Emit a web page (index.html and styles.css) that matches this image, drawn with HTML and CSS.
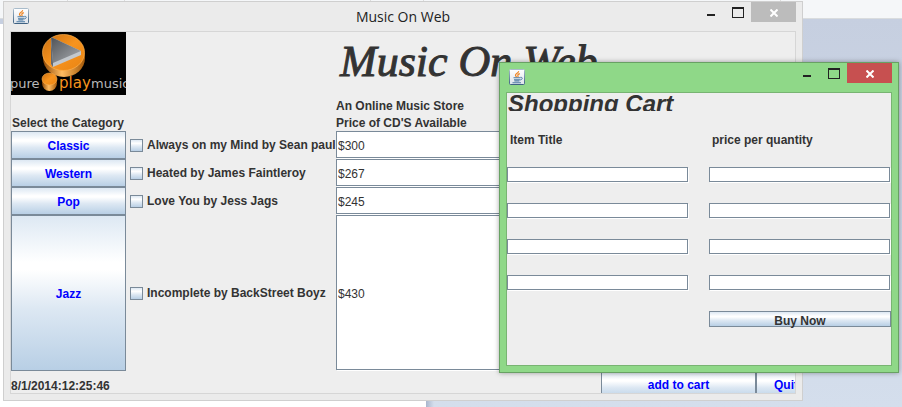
FILE: index.html
```html
<!DOCTYPE html>
<html lang="en">
<head>
<meta charset="utf-8">
<title>Music On Web</title>
<link rel="stylesheet" href="styles.css">
</head>
<body>
<svg width="0" height="0" class="defs" aria-hidden="true">
  <defs>
    <linearGradient id="tile" x1="0" y1="0" x2="0" y2="1"><stop offset="0" stop-color="#fff"/><stop offset="1" stop-color="#dde3ea"/></linearGradient>
    <linearGradient id="edge" x1="0" y1="0" x2="0" y2="1"><stop offset="0" stop-color="#a9bccb"/><stop offset="1" stop-color="#3f6283"/></linearGradient>
    <symbol id="java" viewBox="0 0 16 16">
      <rect x=".5" y=".5" width="15" height="15" rx="1" fill="url(#tile)" stroke="url(#edge)"/>
      <path d="M9.6 2.2C10 4 6.400 4.600 6.500 6.300c0 .8.700 1.200 1 1.900M10.800 4.600C9 5.300 8.400 6 9 7c.3.600 0 1-.4 1.300" fill="none" stroke="#ee8422" stroke-width="1.200"/>
      <path d="M4.500 8.800h7M5 10.700h6M5.400 12h5M3.500 13.700h8.500" stroke="#4c7ba3" stroke-width="1.100"/>
      <path d="M11.500 8.300c2.600-.3 2.200 2.400-.4 2.700" fill="none" stroke="#4c7ba3"/>
    </symbol>
  </defs>
</svg>
<div class="desktop">
  <div class="tabs"><i></i><i></i><i></i><i></i><i></i></div>
  <div class="backdrop"><div class="page"></div><div class="wall"></div></div>

  <main class="window store">
    <header class="titlebar">
      <svg class="app-icon" aria-hidden="true"><use href="#java"/></svg>
      <span class="caption">Music On Web</span>
      <div class="controls">
        <button class="min" aria-label="Minimize"></button>
        <button class="max" aria-label="Maximize"></button>
        <button class="close" aria-label="Close"><svg viewBox="0 0 8 8"><path d="M.5.5l7 7M7.500.5l-7 7"/></svg></button>
      </div>
    </header>
    <div class="client">
      <div class="banner">
        <div class="side">
          <svg class="logo" viewBox="0 0 115 63" role="img" aria-label="pure playmusic">
            <defs>
              <linearGradient id="disc" x1="0" y1="0" x2="1" y2="1"><stop offset="0" stop-color="#c96f12"/><stop offset=".5" stop-color="#f7941f"/><stop offset="1" stop-color="#e88312"/></linearGradient>
              <linearGradient id="rim" x1="0" y1="0" x2="1" y2="0"><stop offset="0" stop-color="#8f4804"/><stop offset=".45" stop-color="#ffbd62"/><stop offset="1" stop-color="#a45808"/></linearGradient>
              <linearGradient id="tri" x1="0" y1="0" x2="1" y2="1"><stop offset="0" stop-color="#4f5256"/><stop offset="1" stop-color="#a9adb2"/></linearGradient>
            </defs>
            <rect width="115" height="63" fill="#000"/>
            <ellipse cx="53" cy="26" rx="21" ry="19" fill="url(#rim)"/>
            <ellipse cx="52.500" cy="20.500" rx="21" ry="18" fill="url(#disc)" stroke="#ffb04c" stroke-width=".7"/>
            <path d="M40 5v27l2 3 28-12v-4z" fill="#c3c8cd"/>
            <path d="M40 5l30 14-28 12z" fill="url(#tri)"/>
            <path d="M40 5l2 26v4l-2-3z" fill="#65696e"/>
            <ellipse cx="38.500" cy="51" rx="7.500" ry="8" fill="url(#rim)"/>
            <ellipse cx="38.500" cy="47" rx="7.500" ry="6" fill="url(#disc)" stroke="#ffb04c" stroke-width=".6"/>
            <text x="-1" y="56" class="logo-text" fill="#b9b9b9">pure</text>
            <text x="48" y="56" class="logo-text brand" fill="#f7941f">play</text>
            <text x="80" y="56" class="logo-text" fill="#b9b9b9">music</text>
          </svg>
          <p>Select the Category</p>
        </div>
        <div class="heading">
          <h1>Music On Web</h1>
          <p>An Online Music Store</p>
          <p>Price of CD'S Available</p>
        </div>
      </div>
      <div class="row">
        <button class="metal">Classic</button>
        <label><input type="checkbox">Always on my Mind by Sean paul</label>
        <input class="field" type="text" value="$300" aria-label="Price of Always on my Mind">
      </div>
      <div class="row">
        <button class="metal">Western</button>
        <label><input type="checkbox">Heated by James Faintleroy</label>
        <input class="field" type="text" value="$267" aria-label="Price of Heated">
      </div>
      <div class="row">
        <button class="metal">Pop</button>
        <label><input type="checkbox">Love You by Jess Jags</label>
        <input class="field" type="text" value="$245" aria-label="Price of Love You">
      </div>
      <div class="row tall">
        <button class="metal">Jazz</button>
        <label><input type="checkbox">Incomplete by BackStreet Boyz</label>
        <input class="field" type="text" value="$430" aria-label="Price of Incomplete">
      </div>
      <footer class="status">
        <time>8/1/2014:12:25:46</time>
        <div class="actions">
          <button class="metal add">add to cart</button>
          <button class="metal quit">Quit</button>
        </div>
      </footer>
    </div>
  </main>

  <section class="window cart">
    <header class="titlebar">
      <svg class="app-icon" aria-hidden="true"><use href="#java"/></svg>
      <div class="controls">
        <button class="min" aria-label="Minimize"></button>
        <button class="max" aria-label="Maximize"></button>
        <button class="close" aria-label="Close"><svg viewBox="0 0 8 8"><path d="M.5.5l7 7M7.500.5l-7 7"/></svg></button>
      </div>
    </header>
    <div class="client order">
      <h2>Shopping Cart</h2>
      <span class="column-title" id="item">Item Title</span>
      <span class="column-title" id="price">price per quantity</span>
      <input class="field" type="text" aria-labelledby="item"><input class="field" type="text" aria-labelledby="price">
      <input class="field" type="text" aria-labelledby="item"><input class="field" type="text" aria-labelledby="price">
      <input class="field" type="text" aria-labelledby="item"><input class="field" type="text" aria-labelledby="price">
      <input class="field" type="text" aria-labelledby="item"><input class="field" type="text" aria-labelledby="price">
      <button class="metal buy">Buy Now</button>
    </div>
  </section>
</div>
</body>
</html>
```
FILE: styles.css
```css
* { box-sizing: border-box; }
body {
  margin: 0;
  font: bold 12px/18px "Liberation Sans", Arial, sans-serif;
  color: #333;
}
p, h1, h2 { margin: 0; }
button, input { font: inherit; margin: 0; }
.defs { position: absolute; }

/* Desktop behind the windows */
.desktop {
  position: relative;
  display: flex;
  flex-direction: column;
  min-height: 100vh;
  overflow: hidden;
}
.tabs {
  display: grid;
  grid-template-columns: 68px 57px 246px 53px 357px;
  height: 19px;
  background: #f5f7f9;
  border-bottom: 1px solid #d9dcde;
}
.tabs i { height: 1px; border-right: 1px solid #dcdcdc; }
.backdrop { flex: 1; display: flex; }
.page { width: 426px; border-top: 5px solid #c6cfe0; background: #fff; }
.wall {
  flex: 1;
  background:
    linear-gradient(90deg, #a9b6cd, transparent 8px),
    linear-gradient(#c6cfe0, #d4deec);
}

/* Window frames */
.window {
  position: absolute;
  padding: 0 6px 6px;
  border: 1px solid #cfcfcf;
  background: #ebebeb;
}
.store { top: 1px; left: 3px; right: 99px; }
.cart {
  top: 62px;
  right: 3px;
  width: 400px;
  background: #8fd888;
  border-color: #68a163;
  box-shadow: 0 0 5px rgba(0, 0, 0, .35);
}
.titlebar {
  display: grid;
  grid-template-columns: 1fr auto 1fr;
  height: 29px;
}
.app-icon { width: 16px; height: 16px; margin: 6px 3px; }
.caption {
  font: 14px/29px "Open Sans", "Noto Sans", sans-serif;
  color: #222;
}
.controls { grid-column: 3; justify-self: end; display: flex; height: 20px; }
.controls button {
  padding: 0;
  border: 0;
  background: none;
  display: grid;
  place-items: center;
}
.controls .min { width: 27px; }
.controls .max { width: 27px; }
.min::before { content: ""; width: 8px; height: 2px; margin-top: 6px; background: #222; }
.max::before { content: ""; width: 10px; height: 8px; border: 1px solid #222; border-top-width: 2px; }
.controls .close { width: 45px; background: #bcbcbc; }
.cart .close { background: #c75050; }
.close svg { width: 8px; height: 8px; margin-top: 1px; fill: none; stroke: #fff; stroke-width: 2; }
.client {
  border: 1px solid #d6d6d6;
  background: #eee;
  overflow: hidden;
}
.cart .client { border-color: #78b472; }

/* Shared controls */
.metal {
  padding: 2px 0 0;
  border: 1px solid #7a8a99;
  background: linear-gradient(#dde8f3, #fff 30%, #fff 35%, #dde8f3 60%, #b8cfe5);
  color: #00f;
  text-align: center;
  white-space: nowrap;
}
.field {
  min-width: 0;
  margin: 0 1px 1px 0;
  padding: 2px 1px 0;
  border: 1px solid #7a8a99;
  border-radius: 0;
  background: #fff;
  box-shadow: 1px 1px 0 #fff;
  color: #333;
  font-weight: normal;
}

/* Store window */
.banner, .row { display: grid; grid-template-columns: 115px 210px 1fr; }
.banner { height: 99px; line-height: 18px; }
.side { display: flex; flex-direction: column; justify-content: space-between; white-space: nowrap; }
.side p { padding-left: 1px; line-height: 16px; }
.logo { display: block; width: 115px; height: 63px; }
.logo-text { font: 13px "DejaVu Sans", sans-serif; }
.logo-text.brand { font-size: 15px; }
.heading {
  grid-column: 3;
  display: flex;
  flex-direction: column;
}
.heading p { flex: none; }
.heading p:last-child { line-height: 16px; }
h1 {
  flex: 1;
  padding-left: 4px;
  font: italic 44px/60px "Liberation Serif", "Times New Roman", serif;
  -webkit-text-stroke: 1px #333;
  white-space: nowrap;
}
.row { height: 28px; }
.row.tall { height: 156px; }
.row label { display: flex; align-items: center; padding-left: 4px; line-height: 20px; white-space: nowrap; }
.row input[type="checkbox"] {
  appearance: none;
  width: 13px;
  height: 13px;
  margin-right: 4px;
  border: 1px solid #7a8a99;
  background: linear-gradient(#dde8f3, #fff 30%, #dde8f3 60%, #b8cfe5);
}
.status {
  display: flex;
  justify-content: space-between;
  height: 22px;
  overflow: hidden;
  line-height: 30px;
}
.actions { display: flex; width: 194px; height: 28px; line-height: 18px; }
.actions .metal { flex: none; padding-top: 0; }
.add { width: 155px; }
.quit { width: 60px; }

/* Shopping cart window */
.order {
  display: grid;
  grid-template-columns: 1fr 1fr;
  grid-auto-rows: 16px;
  gap: 20px;
  padding: 2px 0 38px;
  line-height: 16px;
}
h2 {
  grid-column: 1 / 3;
  padding-left: 1px;
  font: italic bold 24px/18px "Liberation Sans", Arial, sans-serif;
  overflow: hidden;
}
.column-title { padding-left: 3px; line-height: 18px; }
.buy { grid-column: 2; line-height: 14px; color: #333; }
```
